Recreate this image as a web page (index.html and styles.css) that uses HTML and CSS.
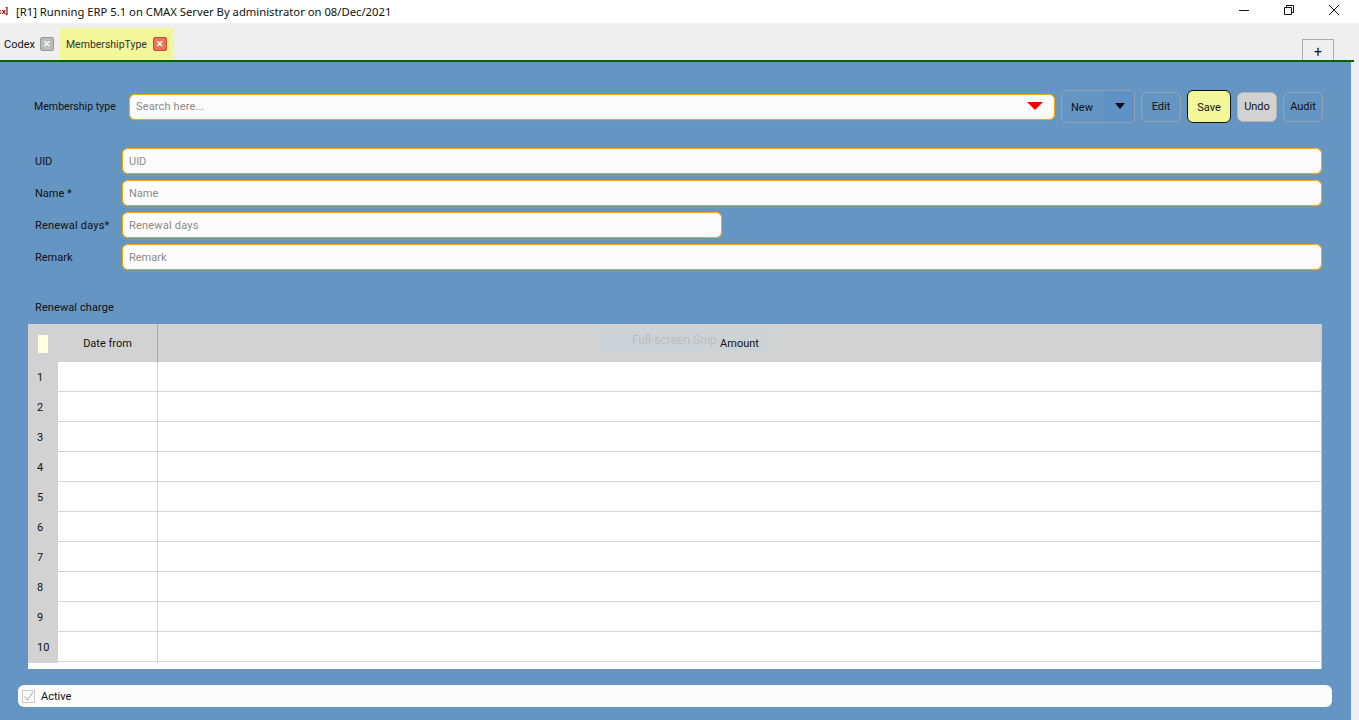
FILE: index.html
```html
<!DOCTYPE html>
<html lang="en">
<head>
    <meta charset="UTF-8">
    <meta name="viewport" content="width=device-width, initial-scale=1.0">
    <title>MembershipType</title>
    <link rel="stylesheet" href="styles.css">
</head>
<body>
    <!-- Window title -->
    <div class="titlebar">
        <span class="app-icon">cx]</span>
        <span class="title-text">[R1] Running ERP 5.1 on CMAX Server By administrator on 08/Dec/2021</span>
        <div class="window-buttons">
            <svg width="10" height="10" viewBox="0 0 10 10"><path d="M0 5.500h10" stroke="#111" fill="none"/></svg>
            <svg width="10" height="10" viewBox="0 0 10 10"><path d="M.5 2.500h7v7h-7zM2.500 2.500v-2h7v7h-2" stroke="#111" fill="none"/></svg>
            <svg width="10" height="10" viewBox="0 0 10 10"><path d="M0 0l10 10M10 0l-10 10" stroke="#111" fill="none"/></svg>
        </div>
    </div>

    <!-- Tabs -->
    <div class="tabbar">
        <div class="tab">
            <span>Codex</span>
            <span class="tab-close">&#10005;</span>
        </div>
        <div class="tab tab-active">
            <span class="tab-name">MembershipType</span>
            <span class="tab-close tab-close-active">&#10005;</span>
        </div>
        <div class="tab-add">+</div>
    </div>

    <div class="content">
        <!-- Toolbar -->
        <div class="toolbar">
            <label class="toolbar-label">Membership type</label>
            <div class="search">
                <input type="text" class="field search-input" placeholder="Search here...">
                <span class="search-arrow"></span>
            </div>
            <div class="btn-group">
                <span class="btn-group-text">New</span>
                <span class="btn-group-arrow"><span class="black-arrow"></span></span>
            </div>
            <button class="btn">Edit</button>
            <button class="btn btn-save">Save</button>
            <button class="btn btn-undo">Undo</button>
            <button class="btn">Audit</button>
        </div>

        <!-- Form -->
        <div class="form">
            <div class="form-row">
                <label>UID</label>
                <input type="text" class="field" placeholder="UID">
            </div>
            <div class="form-row">
                <label>Name *</label>
                <input type="text" class="field" placeholder="Name">
            </div>
            <div class="form-row">
                <label class="label-wide">Renewal days*</label>
                <input type="text" class="field field-short" placeholder="Renewal days">
            </div>
            <div class="form-row">
                <label>Remark</label>
                <input type="text" class="field" placeholder="Remark">
            </div>
        </div>

        <div class="section-label">Renewal charge</div>

        <!-- Grid -->
        <div class="grid">
            <div class="grid-head">
                <div class="corner"><span class="corner-box"></span></div>
                <div class="head-date">Date from</div>
                <div class="head-amount">Amount</div>
                <div class="snip-ghost"><span>Full-screen Snip</span></div>
            </div>
            <div class="grid-row"><div class="row-num">1</div><div class="cell-date"></div><div></div></div>
            <div class="grid-row"><div class="row-num">2</div><div class="cell-date"></div><div></div></div>
            <div class="grid-row"><div class="row-num">3</div><div class="cell-date"></div><div></div></div>
            <div class="grid-row"><div class="row-num">4</div><div class="cell-date"></div><div></div></div>
            <div class="grid-row"><div class="row-num">5</div><div class="cell-date"></div><div></div></div>
            <div class="grid-row"><div class="row-num">6</div><div class="cell-date"></div><div></div></div>
            <div class="grid-row"><div class="row-num">7</div><div class="cell-date"></div><div></div></div>
            <div class="grid-row"><div class="row-num">8</div><div class="cell-date"></div><div></div></div>
            <div class="grid-row"><div class="row-num">9</div><div class="cell-date"></div><div></div></div>
            <div class="grid-row"><div class="row-num">10</div><div class="cell-date"></div><div></div></div>
        </div>

        <!-- Active flag -->
        <div class="active-bar">
            <span class="check">
                <svg width="11" height="11" viewBox="0 0 11 11"><path d="M1.500 5.500l3 3.500 5.500-8" stroke="#c8c8c8" stroke-width="1.500" fill="none"/></svg>
            </span>
            <span>Active</span>
        </div>
    </div>
</body>
</html>
```

FILE: styles.css
```css
html, body {
    margin: 0;
    padding: 0;
}
body {
    width: 1359px;
    height: 720px;
    overflow: hidden;
    background-color: #efefef;
    font-family: Roboto, Arial, sans-serif;
    font-size: 11px;
    color: #111;
}
.titlebar {
    height: 23px;
    background: white;
    display: flex;
    align-items: center;
    overflow: hidden;
}
.app-icon {
    width: 16px;
    flex: none;
    margin-left: -8px;
    margin-right: 8px;
    font-size: 8px;
    font-weight: bold;
    color: #7a1030;
    text-align: right;
}
.title-text {
    font-family: "Noto Sans", sans-serif;
    font-size: 11.25px;
}
.window-buttons {
    margin-left: auto;
    display: flex;
    gap: 35px;
    padding-right: 20px;
    padding-bottom: 3px;
}
.tabbar {
    height: 39px;
    width: 1354px;
    background-color: #efefef;
    border-bottom: 2px solid #006400;
    display: flex;
    align-items: flex-end;
    padding-left: 4px;
    box-sizing: border-box;
}
.tab {
    height: 32px;
    display: flex;
    align-items: center;
    gap: 5px;
    margin-right: 6px;
}
.tab-active {
    background-color: #f2f79a;
    padding: 0 7px 0 6px;
    color: #333;
}
.tab-name {
    font-size: 10.5px;
    width: 82px;
}
.tab-close {
    width: 12px;
    height: 12px;
    border: 1px solid #999;
    background-color: #bbb;
    color: white;
    font-size: 9px;
    font-weight: bold;
    line-height: 12px;
    text-align: center;
    border-radius: 2px;
}
.tab-close-active {
    border-color: #d2492a;
    background-color: #e8745c;
}
.tab-add {
    margin-left: auto;
    margin-right: 20px;
    width: 30px;
    height: 20px;
    border: 1px solid #aaa;
    border-bottom: none;
    text-align: center;
    font-size: 14px;
    line-height: 24px;
    color: #111;
}
.content {
    width: 1351px;
    height: 659px;
    background-color: #6595c2;
    overflow: hidden;
    padding-top: 28px;
    box-sizing: border-box;
}
.toolbar {
    height: 33px;
    display: flex;
    align-items: center;
    padding-left: 34px;
}
.toolbar-label {
    width: 95px;
    flex: none;
    font-size: 10.6px;
}
.field {
    display: block;
    width: 1200px;
    height: 26px;
    box-sizing: border-box;
    border: 1px solid #ffa500;
    box-shadow: 0 0 1px #ffa500;
    border-radius: 6px;
    background-color: #fcfcfc;
    padding: 0 6px;
    font-family: Roboto, Arial, sans-serif;
    font-size: 11px;
}
.field::placeholder {
    color: #8a8a8a;
    opacity: 1;
}
.field-short {
    width: 600px;
    letter-spacing: .2px;
}
.search {
    position: relative;
    width: 926px;
    margin-right: 6px;
}
.search-input {
    width: 100%;
    letter-spacing: .15px;
}
.search-arrow {
    position: absolute;
    right: 12px;
    top: 8px;
    border-left: 8px solid transparent;
    border-right: 8px solid transparent;
    border-top: 8px solid #f00000;
}
.btn-group {
    width: 74px;
    height: 33px;
    box-sizing: border-box;
    border: 1px solid #97a2ae;
    border-radius: 6px;
    display: flex;
    overflow: hidden;
    margin-right: 6px;
}
.btn-group-text {
    width: 43px;
    padding-left: 9px;
    line-height: 33px;
    box-sizing: border-box;
}
.btn-group-arrow {
    flex: 1;
    background-color: #5e92c6;
    display: flex;
    justify-content: center;
    padding-top: 12px;
    box-sizing: border-box;
}
.black-arrow {
    border-left: 5px solid transparent;
    border-right: 5px solid transparent;
    border-top: 6px solid #0a0a14;
    height: 0;
}
.btn {
    width: 40px;
    height: 30px;
    margin-right: 6px;
    padding: 0;
    border: 1px solid #97a2ae;
    border-radius: 6px;
    background: transparent;
    font-family: Roboto, Arial, sans-serif;
    font-size: 11px;
    color: #111;
}
.btn-save {
    width: 44px;
    height: 33px;
    background-color: #f2f79a;
    border-color: #111;
    padding-top: 1px;
}
.btn-undo {
    background-color: #d2d2d2;
    border-color: #b5b5b5;
}
.form {
    margin-top: 25px;
    padding-left: 35px;
}
.form-row {
    display: flex;
    align-items: center;
    height: 26px;
    margin-bottom: 6px;
}
.form-row label {
    width: 87px;
    flex: none;
}
.form-row .label-wide {
    letter-spacing: .2px;
}
.section-label {
    margin-top: 30px;
    padding-left: 35px;
    height: 16px;
    line-height: 16px;
    letter-spacing: .1px;
}
.grid {
    margin: 8px 0 0 28px;
    width: 1294px;
    height: 345px;
    background: white;
    box-sizing: border-box;
    border-right: 1px solid #c8c8c8;
}
.grid-head {
    position: relative;
    display: grid;
    grid-template-columns: 30px 100px 1fr;
    height: 38px;
    background-color: #d2d2d2;
    align-items: center;
    text-align: center;
}
.corner {
    display: flex;
    justify-content: center;
}
.corner-box {
    width: 10px;
    height: 18px;
    background-color: #ffffe0;
}
.head-date {
    height: 100%;
    line-height: 38px;
    padding-top: 1px;
    box-sizing: border-box;
    border-right: 1px solid #aaa;
}
.head-amount {
    line-height: 38px;
    padding-top: 1px;
    position: relative;
    z-index: 1;
}
/* leftover snipping tool toast, sits over the header */
.snip-ghost {
    position: absolute;
    left: 572px;
    top: 5px;
    width: 173px;
    height: 23px;
    background-color: #cdd2d6;
    color: #bdbdbd;
    font-size: 12px;
    line-height: 23px;
    text-align: left;
}
.snip-ghost span {
    margin-left: 32px;
}
.grid-row {
    display: grid;
    grid-template-columns: 30px 100px 1fr;
    height: 30px;
    box-sizing: border-box;
    border-bottom: 1px solid #d4d4d4;
}
.row-num {
    background-color: #d2d2d2;
    line-height: 30px;
    padding: 1px 0 0 9px;
    box-sizing: border-box;
}
.cell-date {
    border-right: 1px solid #d4d4d4;
}
.active-bar {
    margin: 16px 0 0 18px;
    width: 1314px;
    height: 22px;
    background-color: #fcfcfc;
    border-radius: 6px;
    display: flex;
    align-items: center;
    padding-left: 4px;
    box-sizing: border-box;
    gap: 6px;
}
.check {
    width: 11px;
    height: 11px;
    border: 1px solid #c8c8c8;
    display: block;
}
.check svg {
    display: block;
}
```
